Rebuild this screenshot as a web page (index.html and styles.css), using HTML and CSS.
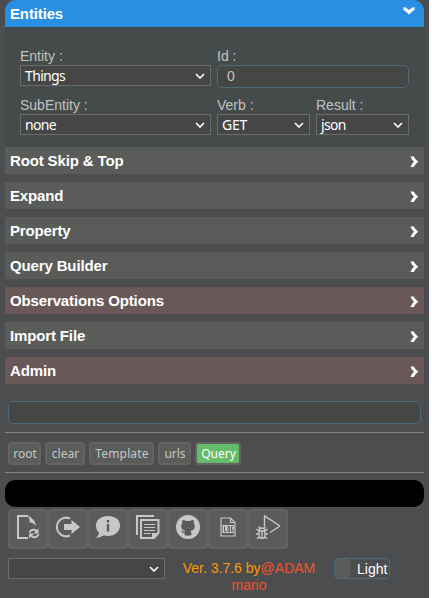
FILE: index.html
```html
<!DOCTYPE html>
<html lang="en">
<head>
<meta charset="utf-8">
<title>Query</title>
<link rel="stylesheet" href="styles.css">
</head>
<body>
<main class="app">
  <section class="accordion">
    <h2 class="head open">Entities<svg class="chev" viewBox="0 0 12 12"><path d="M.5 2Q3 2 6 5Q9 2 11.500 2V5Q9 6 6 9.500Q3 6 .5 5Z"/></svg></h2>
    <div class="body">
      <label class="field wide">Entity :<span class="select">Things<svg viewBox="0 0 10 6"><path d="M1 1l4 4 4-4"/></svg></span></label>
      <label class="field id">Id :<span class="input">0</span></label>
      <label class="field wide">SubEntity :<span class="select">none<svg viewBox="0 0 10 6"><path d="M1 1l4 4 4-4"/></svg></span></label>
      <label class="field">Verb :<span class="select verb">GET<svg viewBox="0 0 10 6"><path d="M1 1l4 4 4-4"/></svg></span></label>
      <label class="field">Result :<span class="select">json<svg viewBox="0 0 10 6"><path d="M1 1l4 4 4-4"/></svg></span></label>
    </div>
    <h2 class="head">Root Skip &amp; Top<svg class="chev" viewBox="0 0 12 12"><path d="M2.500 .5H5.800Q7 3.500 10.300 5.800Q7 8 5.800 11H2.500Q3 8.500 6 5.800Q3 3 2.500 .5Z"/></svg></h2>
    <h2 class="head">Expand<svg class="chev" viewBox="0 0 12 12"><path d="M2.500 .5H5.800Q7 3.500 10.300 5.800Q7 8 5.800 11H2.500Q3 8.500 6 5.800Q3 3 2.500 .5Z"/></svg></h2>
    <h2 class="head">Property<svg class="chev" viewBox="0 0 12 12"><path d="M2.500 .5H5.800Q7 3.500 10.300 5.800Q7 8 5.800 11H2.500Q3 8.500 6 5.800Q3 3 2.500 .5Z"/></svg></h2>
    <h2 class="head">Query Builder<svg class="chev" viewBox="0 0 12 12"><path d="M2.500 .5H5.800Q7 3.500 10.300 5.800Q7 8 5.800 11H2.500Q3 8.500 6 5.800Q3 3 2.500 .5Z"/></svg></h2>
    <h2 class="head warn">Observations Options<svg class="chev" viewBox="0 0 12 12"><path d="M2.500 .5H5.800Q7 3.500 10.300 5.800Q7 8 5.800 11H2.500Q3 8.500 6 5.800Q3 3 2.500 .5Z"/></svg></h2>
    <h2 class="head">Import File<svg class="chev" viewBox="0 0 12 12"><path d="M2.500 .5H5.800Q7 3.500 10.300 5.800Q7 8 5.800 11H2.500Q3 8.500 6 5.800Q3 3 2.500 .5Z"/></svg></h2>
    <h2 class="head warn">Admin<svg class="chev" viewBox="0 0 12 12"><path d="M2.500 .5H5.800Q7 3.500 10.300 5.800Q7 8 5.800 11H2.500Q3 8.500 6 5.800Q3 3 2.500 .5Z"/></svg></h2>
  </section>
  <div class="input url"></div>
  <hr>
  <nav class="actions">
    <button class="btn root">root</button><button class="btn clear">clear</button><button class="btn template">Template</button><button class="btn urls">urls</button><button class="btn query">Query</button>
  </nav>
  <hr>
  <div class="console"></div>
  <nav class="tools">
    <button class="tool"><svg viewBox="0 0 24 24"><path class="line" d="M12 23H2V1H12"/><path d="M11 0C14 2 19 4 20 11Q17 7 13.500 7.500Q14 3 11 0Z"/><path class="line" d="M13.500 17.500Q15 14 19 15L22 17M22.500 19Q21 23 17 22L14.500 20"/><path d="M22.500 13.500V18.500H17.500ZM13 23.500V18.500H18Z"/></svg></button>
    <button class="tool"><svg viewBox="0 0 24 24"><path class="line" d="M14 3.500A9.300 9.300 0 1 0 14 20.500"/><path d="M8 9H15.500V5L24 12L15.500 19V15H8Z"/></svg></button>
    <button class="tool"><svg viewBox="0 0 24 24"><path fill-rule="evenodd" d="M12 1C5 1 0 5 0 10.500Q0 15 3 17.500Q3 20 0 23Q5 22.500 8 20.200Q10 21 12 21C19 21 24 16.500 24 10.500S19 1 12 1ZM10.800 5H13.200V7.500H10.800ZM10.800 9H13.200V16.500H10.800Z"/></svg></button>
    <button class="tool"><svg viewBox="0 0 24 24"><path class="line" d="M1 20V1H18M5 5H22.500V18L18 23H5Z"/><path class="thin" d="M8 9.500H19M8 12.500H19M8 15.500H19M8 18.500H15"/><path d="M16 24V18H23Z"/></svg></button>
    <button class="tool"><svg viewBox="0 0 24 24"><circle cx="12" cy="12" r="12"/><path class="cut" d="M6.500 5Q9 5 10 6H14Q15 5 17.500 5Q18.200 7 17.800 8.500Q19.500 10.500 18.500 13Q17.800 15.500 14.500 16Q15.500 17 15.500 20Q12 21.500 8.500 20V18Q6 18.500 5 15.500Q7 15.500 8 17L9.500 16Q6.200 15.500 5.500 13Q4.500 10.500 6.200 8.500Q5.800 7 6.500 5Z"/></svg></button>
    <button class="tool"><svg viewBox="0 0 24 24"><path class="thin" d="M5 3H14.500L19 7.500V21H5ZM14.500 3V7.500H19"/><path d="M6.500 10H18V18H6.500Z"/><path class="slit" d="M8.500 11.500V16.500H10.500M12 11.500H13.500V16.500H12ZM17 11.500H15.500V16.500H17V14"/></svg></button>
    <button class="tool"><svg viewBox="0 0 24 24"><path class="edge" d="M8.500 11V.8L24 11L14 17.500"/><path class="edge" d="M3 16Q3 13 6 13T9 16V20Q9 23.500 6 23.500T3 20ZM3 16H9M6 16V23M4 13L2.500 11.500M8 13L9.500 11.500M3 19H0M9 19H12M3 16L.5 14M9 16L11.500 14M3 22L.8 24M9 22L11.200 24"/></svg></button>
  </nav>
  <footer class="foot">
    <span class="select saved"><svg viewBox="0 0 10 6"><path d="M1 1l4 4 4-4"/></svg></span>
    <div class="version">Ver. 3.7.6 by<span class="author">@ADAM mario</span></div>
    <div class="toggle"><span class="knob"></span>Light</div>
  </footer>
</main>
</body>
</html>
```
FILE: styles.css
```css
* { box-sizing: border-box; }
body { margin: 0; background: #fff; font-family: "Liberation Sans", Arial, sans-serif; }
.app { width: 429px; height: 598px; padding: 0 5px; background: #4c4d4f; overflow: hidden; }
.head { display: flex; align-items: center; justify-content: space-between; height: 27px; margin: 0 0 8px; padding: 0 4px 0 5px; background: #5a5c5a; color: #fff; font-size: 15px; line-height: 28px; letter-spacing: -.14px; }
.head.open { margin: 0; background: #288fe3; border-radius: 11px 11px 0 0; padding-right: 9px; }
.head.warn { background: #695857; }
.chev { width: 12px; height: 12px; fill: #fff; margin-top: 3px; }
.open .chev { margin: 0 0 5px; }
.body { display: grid; grid-template-columns: 191px 93px 93px; column-gap: 6px; grid-template-rows: 49px 49px; height: 120px; padding: 20px 15px 0; background: #454b4a; }
.field { color: #c0c3c1; font-size: 14px; line-height: 18px; }
.field.id { grid-column: span 2; }
.select { display: flex; align-items: center; justify-content: space-between; height: 21px; padding: 0 5px 0 4px; border: 1px solid #6b6b69; background: #454645; color: #fff; font: 14px/20px "Noto Sans", sans-serif; letter-spacing: -.65px; }
.select.verb { letter-spacing: -.2px; }
.select svg { width: 10px; height: 6px; fill: none; stroke: #fff; stroke-width: 1.6; margin-left: auto; }
.input { display: block; height: 23px; padding: 0 9px; border: 1px solid #4f6976; border-radius: 5px; background: #454745; font-size: 14px; line-height: 21px; }
.url { margin: 17px 3px 8px; }
.accordion { display: flow-root; height: 384px; }
hr { height: 1px; margin: 0; border: 0; background: #858585; }
.actions { display: flex; gap: 4px; height: 39px; padding: 9px 3px 0; }
.btn { height: 23px; padding: 0 0 0 1px; border: 2px solid #656261; border-radius: 4px; background: #5a5c5a; color: #c6c8c7; font: 12px/18px "Noto Sans", sans-serif; letter-spacing: 0; }
.root { width: 33px; }
.clear { width: 40px; }
.template { width: 65px; letter-spacing: .15px; }
.urls { width: 33px; }
.query { width: 46px; background: #66bb6a; color: #fff; }
.console { height: 27px; margin-top: 7px; border-radius: 10px; background: #000; }
.tools { display: flex; padding: 2px 3px 0; }
.tool { width: 40px; height: 40px; padding: 0; border: 2px solid #656160; border-radius: 4px; background: #5a5c5a; }
.tool svg { display: block; width: 24px; height: 24px; margin: 0 auto 4px; fill: #c6c8c7; }
.tool .line, .tool .thin, .tool .edge { fill: none; stroke: #c6c8c7; stroke-width: 2; }
.tool .thin { stroke-width: 1.2; }
.tool .edge { stroke-width: 1.4; }
.tool .cut { fill: #5a5c5a; }
.tool .slit { fill: none; stroke: #5a5c5a; stroke-width: 1; }
.foot { display: flex; align-items: flex-start; padding: 9px 3px 0; }
.saved { width: 157px; }
.version { width: 140px; margin: 2px 0 0 14px; color: #ff9800; font-size: 14px; line-height: 17px; text-align: center; }
.author { color: #f4512c; }
.toggle { display: flex; width: 56px; height: 21px; margin-left: 15px; border: 1px solid #4f6976; border-radius: 4px; color: #fff; font-size: 14px; line-height: 21px; }
.knob { width: 15px; margin-right: 7px; border-right: 1px solid #4f6976; border-radius: 3px; background: #5a5c5a; }
```
